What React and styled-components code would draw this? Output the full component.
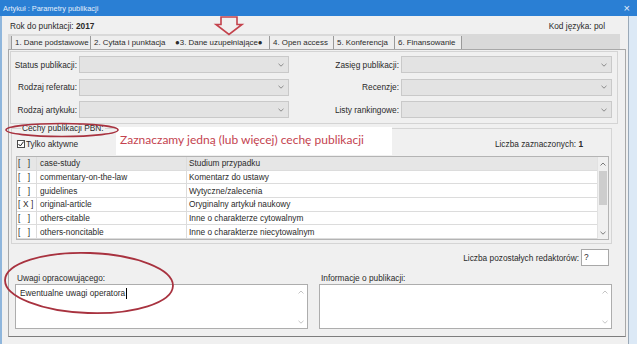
import React from "react";
import styled, { createGlobalStyle } from "styled-components";

const Global = createGlobalStyle`
  html, body { margin: 0; padding: 0; background: #f0f0f0; }
  body { font-family: "Liberation Sans", Arial, sans-serif; }
  * { box-sizing: border-box; }
`;

const Screen = styled.div`
  position: relative;
  width: 637px;
  height: 344px;
  overflow: hidden;
  background: #f0f0f0;
  font-family: "Liberation Sans", Arial, sans-serif;
  font-size: 8.3px;
  color: #2a2a2a;
  display: flex;
  flex-direction: column;
`;

const TitleBar = styled.div`
  height: 16px;
  flex: none;
  background: #2a7fd4;
  display: flex;
  align-items: center;
  justify-content: space-between;
  padding: 0 7px 0 3px;
  color: #e4eefa;
  font-size: 7.4px;
`;

const Close = styled.span`
  font-size: 11px;
  line-height: 1;
  color: #e4eefa;
`;

const Frame = styled.div`
  flex: 1;
  display: flex;
  min-height: 0;
`;

const EdgeLeft = styled.div`
  width: 2px;
  background: #8fb6dc;
`;

const EdgeRight = styled.div`
  width: 9px;
  background: #dce9f6;
  border-left: 1px solid #9aa9b8;
`;

const Body = styled.div`
  flex: 1;
  display: flex;
  flex-direction: column;
  padding-left: 6px;
`;

const HeaderRow = styled.div`
  height: 18px;
  display: flex;
  align-items: center;
  justify-content: space-between;
  padding: 1px 23px 0 2px;
`;

const TabsBar = styled.div`
  width: 612px;
  height: 15px;
  background: #d9d9d9;
  display: flex;
  padding: 2px 0 0 3px;
`;

const Tab = styled.div`
  width: ${(p) => p.$w}px;
  flex: none;
  height: 13px;
  display: flex;
  align-items: center;
  padding: 0 0 0 3px;
  font-size: 7.9px;
  background: #eeeeee;
  border-left: ${(p) => (p.$first ? "1px solid #9a9a9a" : "none")};
  border-right: ${(p) => (p.$sep ? "1px solid #9a9a9a" : "1px solid transparent")};
  white-space: nowrap;
  overflow: hidden;
`;

const Panel = styled.div`
  width: 618px;
  height: 288px;
  border: 1px solid #a8a8a8;
  border-bottom-color: #7d7d7d;
  display: flex;
  flex-direction: column;
  padding: 0;
`;

const CombosBox = styled.div`
  margin: 1px 0 0 1px;
  width: 608px;
  height: 73px;
  border: 1px solid #d4d4d4;
  display: grid;
  grid-template-columns: 68px 210px 112px 211px;
  grid-auto-rows: 17px;
  row-gap: 5.5px;
  padding-top: 4px;
  align-content: start;
`;

const FieldLabel = styled.div`
  align-self: center;
  text-align: right;
  padding-right: 2px;
  white-space: nowrap;
`;

const Combo = styled.div`
  background: #e3e3e3;
  border: 1px solid #c9c9c9;
  display: flex;
  align-items: center;
  justify-content: flex-end;
  padding-right: 4px;
`;

const Chevron = ({ up, color = "#8a8a8a" }) => (
  <svg width="6" height="4" viewBox="0 0 6 4">
    <path
      d={up ? "M0.5 3.5 L3 1 L5.5 3.5" : "M0.5 0.8 L3 3.2 L5.5 0.8"}
      fill="none"
      stroke={color}
      strokeWidth="1"
    />
  </svg>
);

const GroupBox = styled.div`
  position: relative;
  margin: 4px 0 0 2px;
  width: 601px;
  height: 116px;
  border: 1px solid #d5d5d5;
  padding: 8px 0 0 5px;
  display: flex;
  flex-direction: column;
`;

const Legend = styled.span`
  position: absolute;
  top: -5px;
  left: 9px;
  padding: 0 1px;
  background: #f0f0f0;
  line-height: 9px;
`;

const CheckRow = styled.div`
  height: 13px;
  display: flex;
  align-items: center;
  justify-content: space-between;
  padding-right: 28px;
`;

const CheckLabel = styled.label`
  display: flex;
  align-items: center;
  gap: 1px;
`;

const Box = styled.span`
  width: 8px;
  height: 8px;
  border: 1px solid #4a4a4a;
  background: #fff;
  display: inline-flex;
`;

const Table = styled.div`
  margin: 6px 0 0 -1px;
  width: 593px;
  height: 84px;
  border: 1px solid #b4b4b4;
  display: flex;
  background: #fff;
`;

const Rows = styled.div`
  flex: 1;
  overflow: hidden;
`;

const Row = styled.div`
  display: grid;
  grid-template-columns: 20px 150px 1fr;
  height: 13.7px;
  border-bottom: 1px solid #dcdcdc;
  background: ${(p) => (p.$sel ? "#e6e6e6" : "#ffffff")};
`;

const Cell = styled.div`
  border-right: ${(p) => (p.$last ? "none" : "1px solid #dcdcdc")};
  padding-left: ${(p) => p.$pl || 2}px;
  display: flex;
  align-items: center;
  white-space: pre;
  overflow: hidden;
  letter-spacing: ${(p) => (p.$mark ? "2.6px" : "normal")};
`;

const ScrollBar = styled.div`
  width: 11px;
  background: #f0f0f0;
  border-left: 1px solid #e2e2e2;
  display: flex;
  flex-direction: column;
  align-items: center;
`;

const ArrowCell = styled.div`
  height: 13px;
  display: flex;
  align-items: center;
  justify-content: center;
`;

const Thumb = styled.div`
  width: 8px;
  height: 34px;
  margin-top: 1px;
  background: #cdcdcd;
`;

const Spacer = styled.div`
  flex: 1;
`;

const EditorsRow = styled.div`
  margin-top: 5px;
  height: 17px;
  display: flex;
  align-items: center;
  justify-content: flex-end;
  gap: 2px;
  padding-right: 16px;
`;

const SmallInput = styled.div`
  width: 28px;
  height: 17px;
  background: #fff;
  border: 1px solid #a8a8a8;
  padding: 2px 0 0 2px;
`;

const TwoCols = styled.div`
  display: grid;
  grid-template-columns: 293px 293px;
  column-gap: 11px;
  padding-left: 6px;
  margin-top: ${(p) => p.$mt || 0}px;
  height: ${(p) => p.$h}px;
`;

const AreaLabel = styled.div`
  padding-left: 2px;
  display: flex;
  align-items: center;
`;

const TextArea = styled.div`
  background: #fff;
  border: 1px solid #adadad;
  display: flex;
`;

const AreaText = styled.div`
  flex: 1;
  padding: 3px 0 0 4px;
  line-height: 10px;
  display: flex;
  align-items: flex-start;
`;

const Caret = styled.span`
  display: inline-block;
  width: 1px;
  height: 11px;
  background: #000;
  margin-left: 1px;
`;

const AreaScroll = styled.div`
  width: 12px;
  display: flex;
  flex-direction: column;
  justify-content: space-between;
  align-items: center;
  padding: 5px 0 4px;
`;

/* overlays (annotations drawn over the dialog) */
const Overlay = styled.svg`
  position: absolute;
  left: ${(p) => p.$x}px;
  top: ${(p) => p.$y}px;
  overflow: visible;
  pointer-events: none;
`;

const Note = styled.div`
  position: absolute;
  left: 116px;
  top: 127px;
  width: 276px;
  height: 28px;
  background: #ffffff;
  color: #c4434f;
  font-family: Lato, "Open Sans", sans-serif;
  font-size: 12px;
  line-height: 25px;
  padding-left: 4px;
  white-space: nowrap;
`;

const rows = [
  ["[ ]", "case-study", "Studium przypadku", true],
  ["[ ]", "commentary-on-the-law", "Komentarz do ustawy"],
  ["[ ]", "guidelines", "Wytyczne/zalecenia"],
  ["[X]", "original-article", "Oryginalny artykuł naukowy"],
  ["[ ]", "others-citable", "Inne o charakterze cytowalnym"],
  ["[ ]", "others-noncitable", "Inne o charakterze niecytowalnym"],
  ["", "", ""],
];

const tabs = [
  { t: "1. Dane podstawowe", w: 80, sep: true, first: true },
  { t: "2. Cytata i punktacja", w: 81, sep: false },
  { t: "●3. Dane uzupełniające●", w: 98, sep: true },
  { t: "4. Open access", w: 64, sep: true },
  { t: "5. Konferencja", w: 61, sep: true },
  { t: "6. Finansowanie", w: 67, sep: true },
];

export default function App() {
  return (
    <>
      <Global />
      <Screen>
        <TitleBar>
          <span>Artykuł : Parametry publikacji</span>
          <Close>×</Close>
        </TitleBar>
        <Frame>
          <EdgeLeft />
          <Body>
            <HeaderRow>
              <span>
                Rok do punktacji: <b>2017</b>
              </span>
              <span>Kod języka: pol</span>
            </HeaderRow>
            <TabsBar>
              {tabs.map((tb) => (
                <Tab key={tb.t} $w={tb.w} $sep={tb.sep} $first={tb.first}>
                  {tb.t}
                </Tab>
              ))}
            </TabsBar>
            <Panel>
              <CombosBox>
                <FieldLabel>Status publikacji:</FieldLabel>
                <Combo><Chevron /></Combo>
                <FieldLabel>Zasięg publikacji:</FieldLabel>
                <Combo><Chevron /></Combo>
                <FieldLabel>Rodzaj referatu:</FieldLabel>
                <Combo><Chevron /></Combo>
                <FieldLabel>Recenzje:</FieldLabel>
                <Combo><Chevron /></Combo>
                <FieldLabel>Rodzaj artykułu:</FieldLabel>
                <Combo><Chevron /></Combo>
                <FieldLabel>Listy rankingowe:</FieldLabel>
                <Combo><Chevron /></Combo>
              </CombosBox>

              <GroupBox>
                <Legend>Cechy publikacji PBN:</Legend>
                <CheckRow>
                  <CheckLabel>
                    <Box>
                      <svg width="6" height="6" viewBox="0 0 6 6">
                        <path d="M0.5 3 L2.3 5 L5.6 0.6" fill="none" stroke="#222" strokeWidth="1" />
                      </svg>
                    </Box>
                    Tylko aktywne
                  </CheckLabel>
                  <span>
                    Liczba zaznaczonych: <b>1</b>
                  </span>
                </CheckRow>
                <Table>
                  <Rows>
                    {rows.map((r, i) => (
                      <Row key={i} $sel={r[3]}>
                        <Cell $mark $pl={1}>{r[0]}</Cell>
                        <Cell $pl={3}>{r[1]}</Cell>
                        <Cell $last $pl={2}>{r[2]}</Cell>
                      </Row>
                    ))}
                  </Rows>
                  <ScrollBar>
                    <ArrowCell><Chevron up color="#7a7a7a" /></ArrowCell>
                    <Thumb />
                    <Spacer />
                    <ArrowCell><Chevron color="#7a7a7a" /></ArrowCell>
                  </ScrollBar>
                </Table>
              </GroupBox>

              <EditorsRow>
                <span>Liczba pozostałych redaktorów:</span>
                <SmallInput>?</SmallInput>
              </EditorsRow>

              <TwoCols $mt={6} $h={11}>
                <AreaLabel>Uwagi opracowującego:</AreaLabel>
                <AreaLabel>Informacje o publikacji:</AreaLabel>
              </TwoCols>
              <TwoCols $mt={1} $h={45}>
                <TextArea>
                  <AreaText>
                    Ewentualne uwagi operatora
                    <Caret />
                  </AreaText>
                  <AreaScroll>
                    <Chevron up color="#c4c4c4" />
                    <Chevron color="#c4c4c4" />
                  </AreaScroll>
                </TextArea>
                <TextArea>
                  <AreaText />
                  <AreaScroll>
                    <Chevron up color="#c4c4c4" />
                    <Chevron color="#c4c4c4" />
                  </AreaScroll>
                </TextArea>
              </TwoCols>
            </Panel>
          </Body>
          <EdgeRight />
        </Frame>

        <Overlay $x={214} $y={15} width="30" height="22" viewBox="0 0 30 22">
          <path
            d="M7 2 H23 V9.5 H28 L15 19.5 L2 9.5 H7 Z"
            fill="none"
            stroke="#c4424c"
            strokeWidth="1.6"
            strokeLinejoin="miter"
          />
        </Overlay>

        <Note>Zaznaczamy jedną (lub więcej) cechę publikacji</Note>

        <Overlay $x={0} $y={115} width="130" height="30" viewBox="0 0 130 30">
          <ellipse cx="62" cy="15" rx="56" ry="6.5" fill="none" stroke="#a8323f" strokeWidth="1.6" />
        </Overlay>

        <Overlay $x={0} $y={245} width="180" height="80" viewBox="0 0 180 80">
          <ellipse
            cx="89"
            cy="38"
            rx="84"
            ry="30"
            fill="none"
            stroke="#a8323f"
            strokeWidth="1.8"
            transform="rotate(2 89 38)"
          />
        </Overlay>
      </Screen>
    </>
  );
}
